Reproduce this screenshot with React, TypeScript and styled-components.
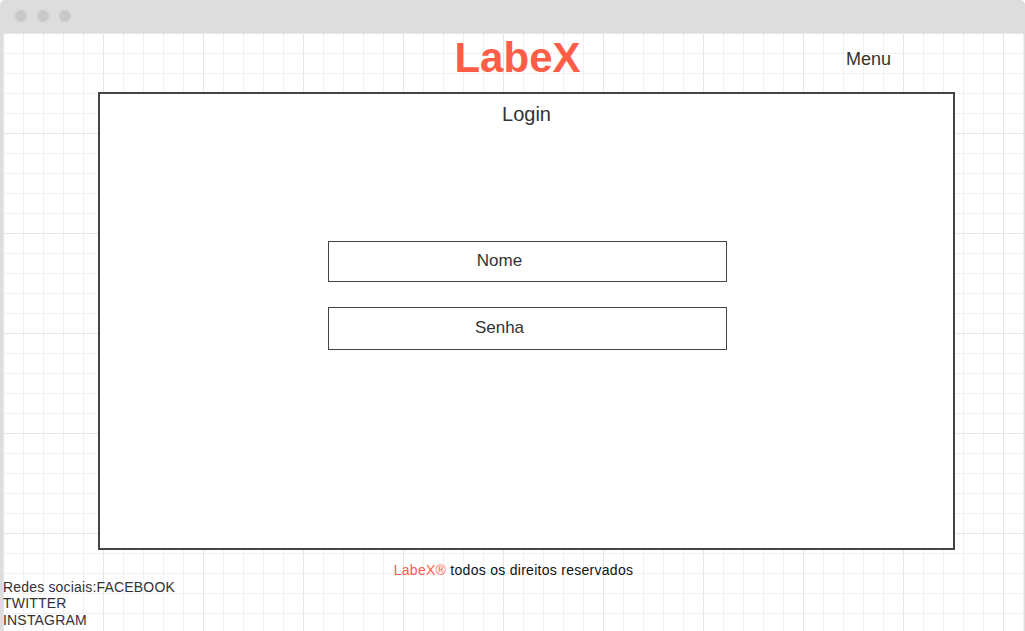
import { createGlobalStyle } from "styled-components";
import styled from "styled-components";

// 全局样式
const GlobalStyle = createGlobalStyle`
  html, body {
    margin: 0;
    padding: 0;
    background: #ffffff;
    font-family: "Liberation Sans", Arial, sans-serif;
  }
  * {
    box-sizing: border-box;
  }
`;

const ACCENT = "#ff5d47";

// 浏览器窗口外框
const Window = styled.div`
  display: flex;
  flex-direction: column;
  width: 1025px;
  height: 631px;
  overflow: hidden;
`;

const TitleBar = styled.div`
  height: 33px;
  flex: none;
  background: #dddddd;
  border-radius: 5px 5px 0 0;
  display: flex;
  align-items: center;
  gap: 10px;
  padding: 0 0 2px 15px;
`;

const Dot = styled.span`
  width: 12px;
  height: 12px;
  border-radius: 50%;
  background: #c9c9c9;
`;

// 网格画布
const Canvas = styled.div`
  flex: 1;
  border-left: 3px solid #dddddd;
  border-right: 1px solid #dddddd;
  background:
    linear-gradient(to right, #e6e6e6 1px, transparent 1px) 0 0 / 100px 100px,
    linear-gradient(to bottom, #e6e6e6 1px, transparent 1px) 0 0 / 100px 100px,
    linear-gradient(to right, #f0f0f0 1px, transparent 1px) 0 0 / 20px 20px,
    linear-gradient(to bottom, #f0f0f0 1px, transparent 1px) 0 0 / 20px 20px,
    #ffffff;
  display: flex;
  flex-direction: column;
`;

const Header = styled.header`
  height: 59px;
  display: grid;
  grid-template-columns: 1fr auto 1fr;
  align-items: start;
`;

const Logo = styled.h1`
  grid-column: 2;
  margin: 1px 0 0 8px;
  font-size: 42px;
  font-weight: 700;
  color: ${ACCENT};
  line-height: normal;
`;

const MenuLink = styled.a`
  grid-column: 3;
  justify-self: end;
  margin: 16px 133px 0 0;
  font-size: 18px;
  color: #333333;
  line-height: normal;
  cursor: pointer;
`;

// 登录面板
const Panel = styled.main`
  margin-left: 95px;
  width: 857px;
  height: 458px;
  border: 2px solid #444444;
  background: #ffffff;
  padding-top: 9px;
  display: flex;
  flex-direction: column;
  align-items: center;
`;

const PanelTitle = styled.h2`
  margin: 0;
  font-size: 20px;
  font-weight: 400;
  color: #333333;
  line-height: normal;
`;

const Form = styled.form`
  margin: 115px 0 0 2px;
  display: flex;
  flex-direction: column;
  gap: 25px;
`;

const Field = styled.input<{ $h: number }>`
  width: 399px;
  height: ${(p) => p.$h}px;
  border: 1px solid #444444;
  border-radius: 0;
  padding: 0 56px 2px 0;
  margin: 0;
  outline: none;
  background: #ffffff;
  text-align: center;
  font-family: "Liberation Sans", Arial, sans-serif;
  font-size: 17px;
  color: #333333;

  &::placeholder {
    color: #333333;
    opacity: 1;
  }
`;

// 页脚
const Copyright = styled.p`
  margin: 12px 0 0;
  text-align: center;
  font-size: 14px;
  line-height: 16.7px;
  letter-spacing: 0.28px;
  color: #111111;
`;

const Brand = styled.span`
  color: ${ACCENT};
`;

const Socials = styled.div`
  font-size: 14px;
  line-height: 16.7px;
  letter-spacing: 0.18px;
  color: #333333;
`;

export default function App() {
  return (
    <>
      <GlobalStyle />
      <Window>
        <TitleBar>
          <Dot />
          <Dot />
          <Dot />
        </TitleBar>
        <Canvas>
          <Header>
            <Logo>LabeX</Logo>
            <MenuLink>Menu</MenuLink>
          </Header>

          <Panel>
            <PanelTitle>Login</PanelTitle>
            <Form onSubmit={(e) => e.preventDefault()}>
              <Field $h={41} placeholder="Nome" />
              <Field $h={43} type="password" placeholder="Senha" />
            </Form>
          </Panel>

          <Copyright>
            <Brand>LabeX®</Brand> todos os direitos reservados
          </Copyright>
          <Socials>
            <div>Redes sociais:FACEBOOK</div>
            <div>TWITTER</div>
            <div>INSTAGRAM</div>
          </Socials>
        </Canvas>
      </Window>
    </>
  );
}
